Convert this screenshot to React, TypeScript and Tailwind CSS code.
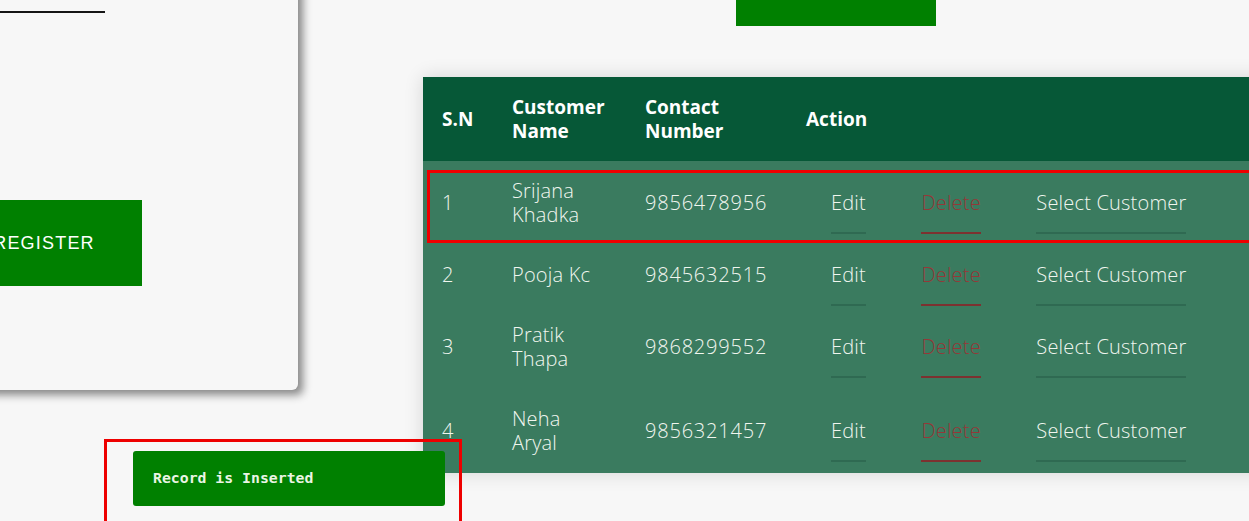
import React from "react";

interface Customer {
  sn: number;
  name: string;
  contact: string;
}

const customers: Customer[] = [
  { sn: 1, name: "Srijana Khadka", contact: "9856478956" },
  { sn: 2, name: "Pooja Kc", contact: "9845632515" },
  { sn: 3, name: "Pratik Thapa", contact: "9868299552" },
  { sn: 4, name: "Neha Aryal", contact: "9856321457" },
];

const rowGrid = "grid grid-cols-[70px_133px_161px_1fr]";
const cell = "pl-[19px] py-[18px] leading-[24px]";

function CustomerRow({ sn, name, contact }: Customer) {
  return (
    <div className={`${rowGrid} items-center text-[20px] font-light tracking-[0.2px] text-[#f1f6ef]`}>
      <div className={cell}>{sn}</div>
      <div className={`${cell} pr-6`}>{name}</div>
      <div className={`${cell} tracking-[0.8px]`}>{contact}</div>
      <div className={`${cell} whitespace-nowrap`}>
        <a href="#" className="mx-[25px] pb-[16px] border-b-2 border-[#2f6a52]">
          Edit
        </a>{" "}
        <a href="#" className="mx-[25px] pb-[16px] border-b-2 border-[#7c3130] text-[#943838]">
          Delete
        </a>{" "}
        <a href="#" className="mx-[25px] pb-[16px] border-b-2 border-[#2f6a52]">
          Select Customer
        </a>
      </div>
    </div>
  );
}

export default function App() {
  return (
    <div className="relative h-[521px] w-full overflow-hidden bg-[#f7f7f7] font-['Open_Sans',sans-serif]">
      <div className="flex items-start">
        <div className="-ml-[42px] -mt-[20px] h-[410px] w-[340px] shrink-0 rounded-md bg-[#f7f7f7] pt-[31px] shadow-[5px_5px_9px_rgba(0,0,0,0.45)]">
          <div className="h-[2px] w-[147px] bg-[#151515]" />
          <button className="mt-[187px] flex h-[86px] w-[184px] items-center justify-center bg-[#008000] pr-[12px] font-['Liberation_Sans',Arial,sans-serif] text-[18px] tracking-[1.2px] text-white">
            REGISTER
          </button>
        </div>

        <div className="ml-[125px] flex shrink-0 flex-col">
          <div className="ml-[313px] h-[26px] w-[200px] bg-[#008000]" />
          <div className="mt-[51px] w-[900px] bg-[#3a7b5f] shadow-[0_0_18px_rgba(0,0,0,0.14)]">
            <div className={`${rowGrid} h-[84px] items-center bg-[#065837] text-[19px] font-bold text-white`}>
              <div className="pl-[19px] leading-[24px]">S.N</div>
              <div className="pl-[19px] leading-[24px] w-[110px]">Customer Name</div>
              <div className="pl-[19px] leading-[24px] w-[110px]">Contact Number</div>
              <div className="pl-[19px] leading-[24px]">Action</div>
            </div>
            {customers.map((c) => (
              <CustomerRow key={c.sn} {...c} />
            ))}
          </div>
        </div>
      </div>

      {/* flash message */}
      <div className="absolute left-[133px] top-[451px] flex h-[55px] w-[312px] items-center rounded-[3px] bg-[#008000] pl-[20px] font-['DejaVu_Sans_Mono',monospace] text-[14.8px] font-bold text-[#eaf5e4]">
        Record is Inserted
      </div>

      {/* red annotation boxes */}
      <div className="pointer-events-none absolute left-[427px] top-[170px] h-[73px] w-[840px] border-[3px] border-[#ee0000]" />
      <div className="pointer-events-none absolute left-[104px] top-[439px] h-[100px] w-[358px] border-[3px] border-[#ee0000]" />
    </div>
  );
}
